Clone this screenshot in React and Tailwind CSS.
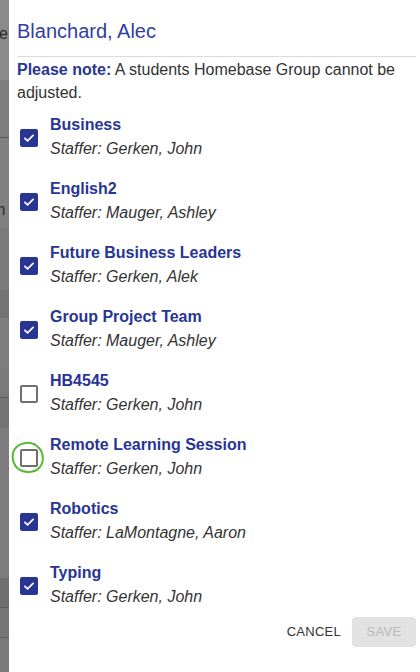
import React from 'react';

const groups = [
  { name: 'Business', staffer: 'Gerken, John', checked: true },
  { name: 'English2', staffer: 'Mauger, Ashley', checked: true },
  { name: 'Future Business Leaders', staffer: 'Gerken, Alek', checked: true },
  { name: 'Group Project Team', staffer: 'Mauger, Ashley', checked: true },
  { name: 'HB4545', staffer: 'Gerken, John', checked: false },
  { name: 'Remote Learning Session', staffer: 'Gerken, John', checked: false, circled: true },
  { name: 'Robotics', staffer: 'LaMontagne, Aaron', checked: true },
  { name: 'Typing', staffer: 'Gerken, John', checked: true },
];

// ── Checkbox ─────────────────────────────────────────────────────────────────

function Box({ checked }) {
  if (checked) {
    return (
      <div className="w-[18px] h-[18px] rounded-[2px] bg-[#283593] flex items-center justify-center shrink-0">
        <svg width="14" height="14" viewBox="0 0 24 24" fill="none">
          <path d="M5 12.5l4.5 4.5L19 7.5" stroke="white" strokeWidth="3" strokeLinecap="round" strokeLinejoin="round" />
        </svg>
      </div>
    );
  }
  return <div className="w-[18px] h-[18px] rounded-[2px] border-2 border-[#707070] shrink-0" />;
}

function GroupRow({ name, staffer, checked, circled }) {
  return (
    <div className="flex items-center gap-3 py-2 pl-[3px]">
      <div className="relative mt-[2px]">
        <Box checked={checked} />
        {circled && (
          <svg className="absolute -left-[9px] -top-[8px]" width="34" height="34" viewBox="0 0 34 34" fill="none">
            <path
              d="M24 3.5C18 0.5 8 1.5 3.5 8.5c-3.5 6-2 15 4 19.5 6 4.5 16 4 21-1.5 4.5-5 4.5-14-0.5-19.5-1.5-1.6-3-2.8-5-3.8"
              stroke="#55bb35"
              strokeWidth="2"
              strokeLinecap="round"
            />
          </svg>
        )}
      </div>
      <div className="flex flex-col leading-6">
        <span className="text-[16px] font-bold text-[#283593]">{name}</span>
        <span className="text-[16px] italic text-[#333]">Staffer: {staffer}</span>
      </div>
    </div>
  );
}

// ── Backdrop strip (page underneath the dialog) ──────────────────────────────

function Backdrop() {
  return (
    <div className="w-[9px] shrink-0 flex flex-col overflow-hidden bg-[#7c7c7c] text-[#2a2a2a] text-[16px]">
      <div className="h-[80px] bg-[#8b8b8b] relative">
        <span className="absolute -left-[1px] top-[22px]">e</span>
      </div>
      <div className="h-[58px] bg-[#7e7e7e] border-b border-[#5a5a5a]" />
      <div className="h-[90px] bg-[#808080] relative">
        <span className="absolute -left-[8px] top-[60px]">th</span>
      </div>
      <div className="h-[62px] bg-[#7b7b7b]" />
      <div className="h-[28px] bg-[#737373]" />
      <div className="h-[50px] bg-[#7f7f7f]" />
      <div className="h-[30px] bg-[#7a7a7a] border-b border-[#5e5e5e]" />
      <div className="h-[30px] bg-[#747474]" />
      <div className="h-[150px] bg-[#7d7d7d]" />
      <div className="h-[30px] bg-[#6f6f6f] border-b border-[#5e5e5e]" />
      <div className="h-[30px] bg-[#767676] border-b border-[#5e5e5e]" />
      <div className="flex-1 bg-[#7a7a7a]" />
    </div>
  );
}

export default function App() {
  return (
    <div className="w-[420px] h-[672px] flex overflow-hidden" style={{ fontFamily: '"Liberation Sans", Arial, sans-serif' }}>
      <Backdrop />
      <div className="flex-1 bg-white pl-2 pr-1 flex flex-col">
        <h1 className="text-[20px] text-[#303f9f] leading-6 pt-[19px] pb-[13px] border-b border-[#dcdcdc]">
          Blanchard, Alec
        </h1>
        <p className="text-[16px] leading-[23px] text-[#333] pt-[1px]">
          <span className="font-bold text-[#283593]">Please note:</span> A students Homebase Group cannot be adjusted.
        </p>
        <div className="flex flex-col mt-px">
          {groups.map((g) => (
            <GroupRow key={g.name} {...g} />
          ))}
        </div>
        <div className="flex justify-end items-center gap-[3px]">
          <button className="h-[30px] px-2 text-[13px] tracking-[0.02em] text-[#333] rounded">CANCEL</button>
          <button className="h-[30px] w-[64px] text-[13px] tracking-[0.02em] text-[#b9b9b9] bg-[#e2e2e2] rounded">SAVE</button>
        </div>
      </div>
    </div>
  );
}
